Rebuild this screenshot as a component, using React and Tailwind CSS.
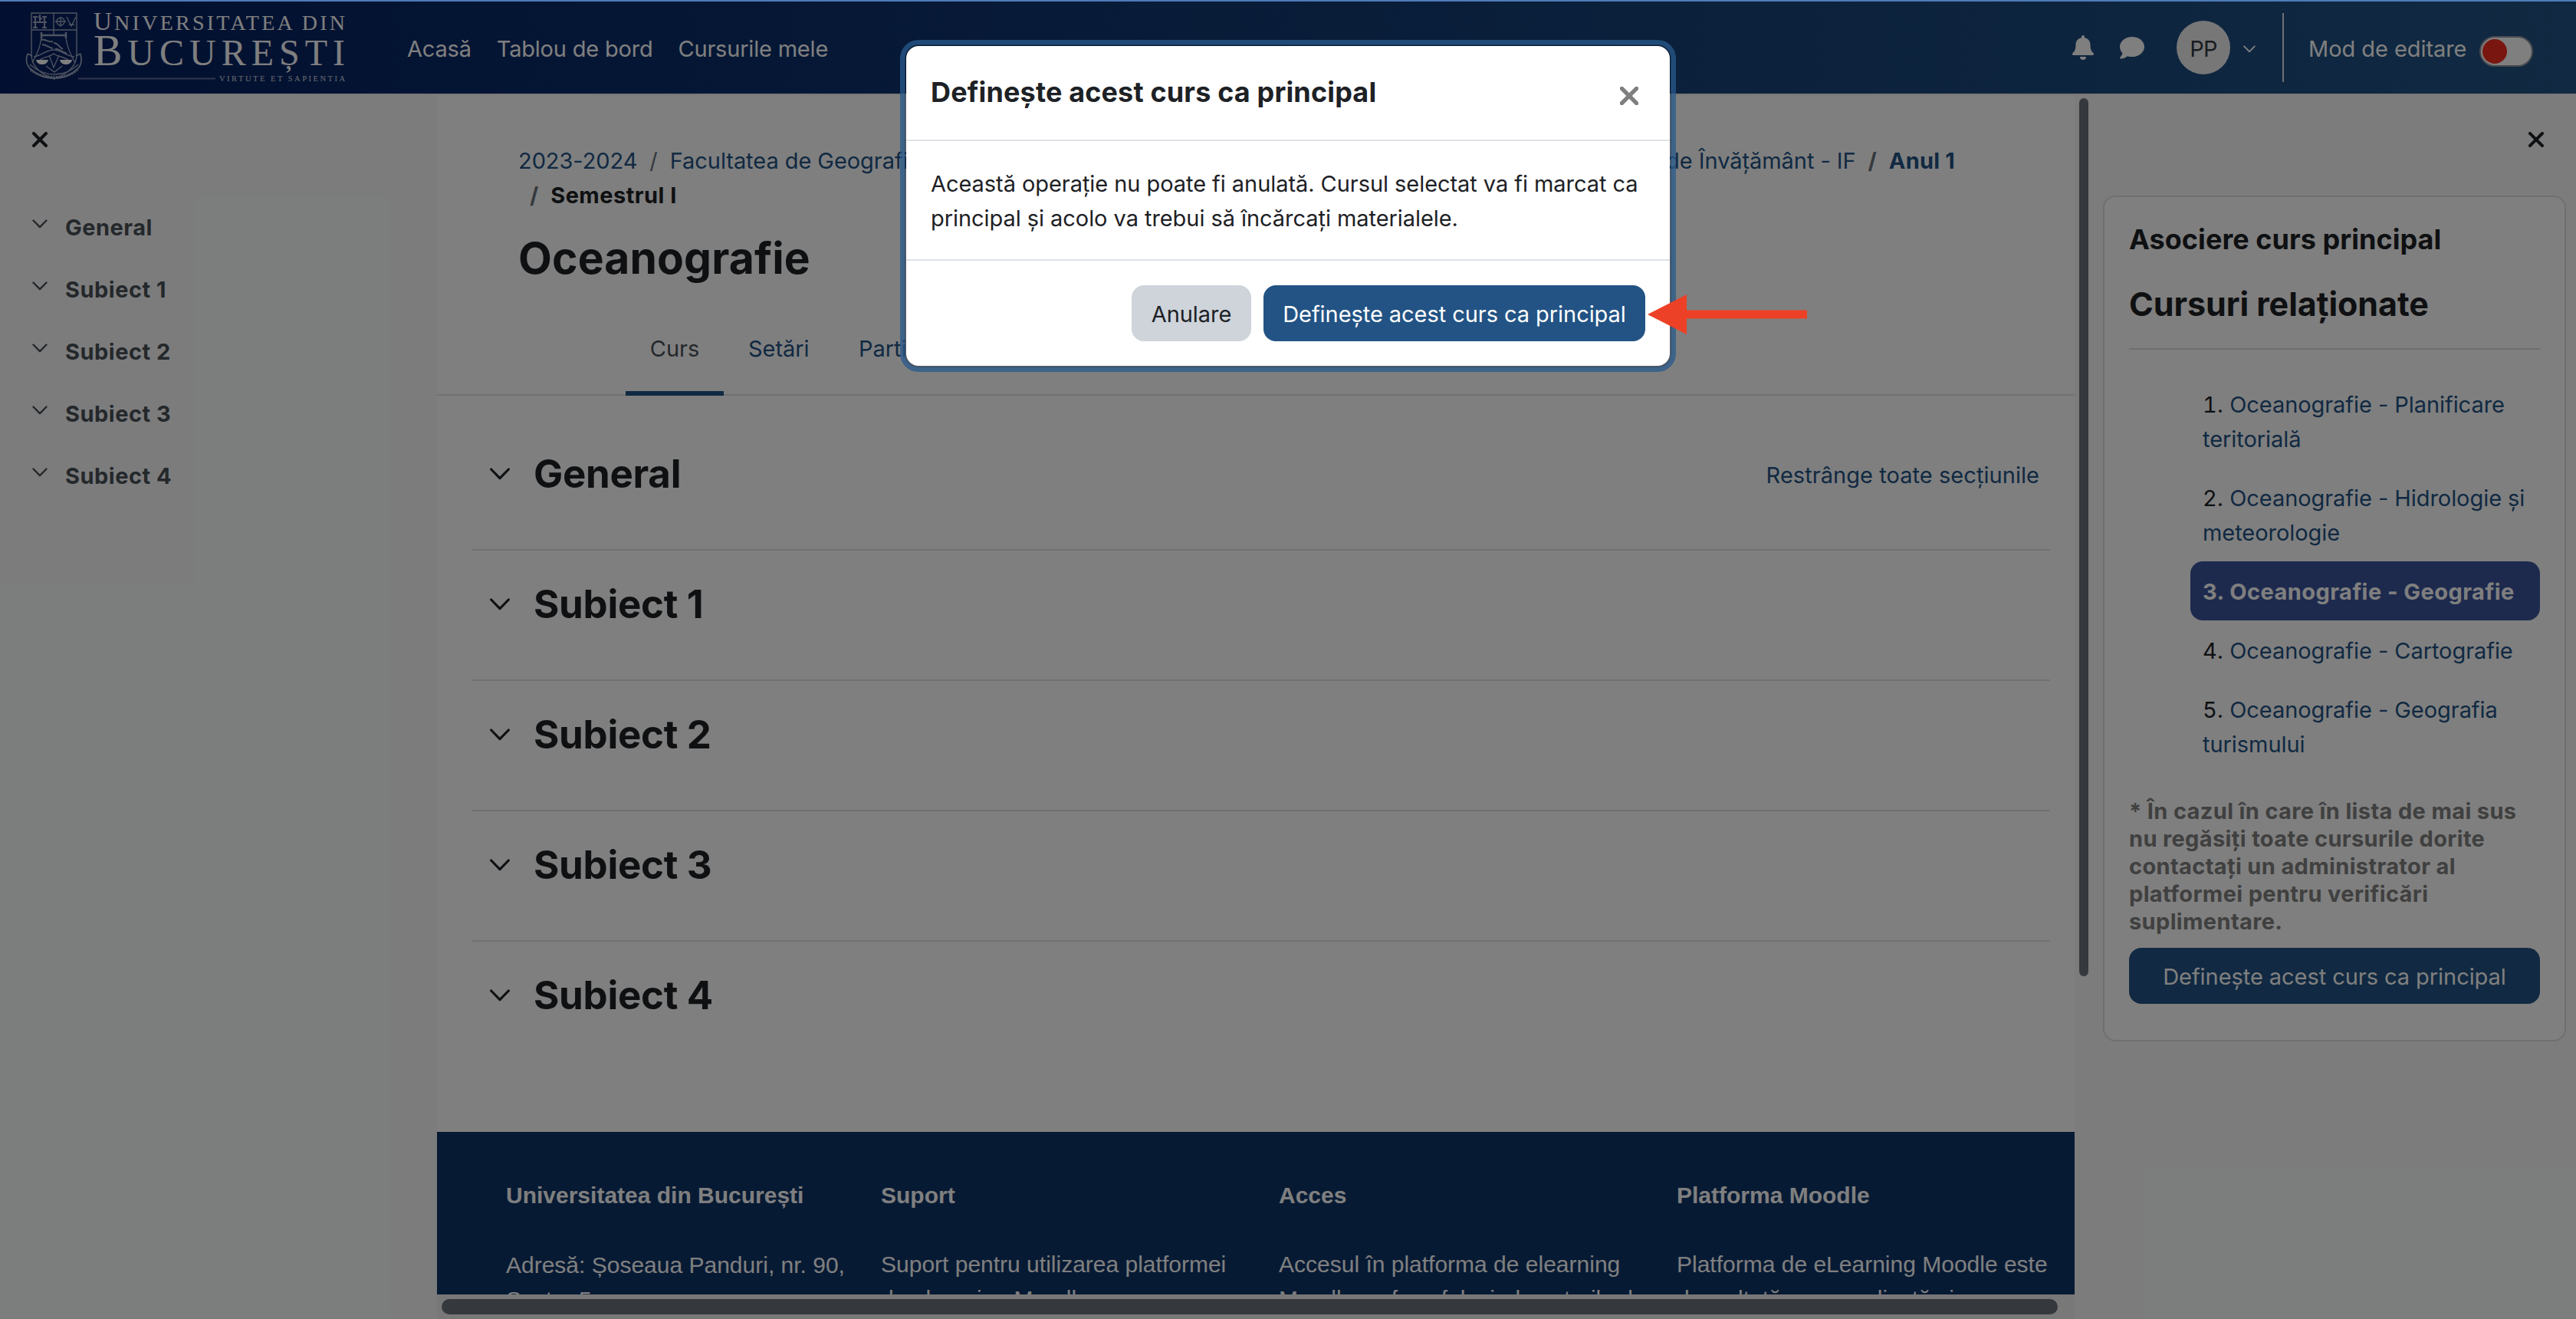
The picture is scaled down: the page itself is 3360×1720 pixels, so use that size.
import React from "react";

const sections = ["General", "Subiect 1", "Subiect 2", "Subiect 3", "Subiect 4"];

const relatedCourses = [
  "Oceanografie - Planificare teritorială",
  "Oceanografie - Hidrologie și meteorologie",
  "Oceanografie - Geografie",
  "Oceanografie - Cartografie",
  "Oceanografie - Geografia turismului",
];

const Chevron = ({ className, strokeWidth = 2 }) => (
  <svg viewBox="0 0 20 12" fill="none" stroke="currentColor" strokeWidth={strokeWidth} strokeLinecap="round" strokeLinejoin="round" className={className}>
    <path d="M1.5 1.5 10 10.2 18.5 1.5" />
  </svg>
);

const Cross = ({ className, strokeWidth = 4 }) => (
  <svg viewBox="0 0 20 20" fill="none" stroke="currentColor" strokeWidth={strokeWidth} strokeLinecap="round" className={className}>
    <path d="M2 2 18 18M18 2 2 18" />
  </svg>
);

const Logo = () => (
  <svg viewBox="0 0 418 92" className="w-[418px] h-[92px] -mt-1 overflow-visible" fill="none" stroke="#fff">
    {/* coat of arms */}
    <g strokeWidth="1.4" opacity="0.6">
      <path d="M7 3h59v54c0 18-16 27-29.500 32C23 84 7 75 7 57z" />
      <path d="M7 25h59M36 3v22" />
      <path d="M12 8v14M24 8v14M9 8h6M21 8h6M9 22h6M21 22h6M9 15h18M18 5v9M16 8l5 3" strokeWidth="2" />
      <circle cx="45" cy="14" r="5" />
      <path d="M38 14h14M45 8v13M53 8l6 12 6-12M56 18h7" />
      <path d="M19 32h34M20 28v8M52 28v8" strokeWidth="2.500" />
      <path d="M36 25v7M20 36c-2 12-6 22-12 32M52 36c2 12 6 22 12 32" />
      <path d="M19 38c6-2 11 4 16 2M21 44c6 0 9 5 14 5M36 42c6 0 7 6 12 8M38 50c5-2 9 6 15 5" strokeWidth="2" />
      <path d="M10 60c10-1 16-9 26-9s16 8 27 9M16 66c8-8 13-4 20-10 8 6 12 2 21 10" />
      <path d="M2 56c-3 8-1 15 3 19 9 9 20 13 32 13s22-4 31-13c4-4 5-11 3-19M2 56l6 3M71 56l-6 3" strokeWidth="1.800" />
      <path d="M5 70c10 9 20 13 32 13s22-4 31-13M30 58l6 16 7-16M26 72l11 8 10-8" />
      <path d="M6 77c9 7 19 9.500 31 9.500S59 84 67 77" strokeDasharray="2 1.500" strokeWidth="3" />
    </g>
    <path d="M13 64h16c-1 4-4 6-8 6s-7-2-8-6zM44 64h16c-1 4-4 6-8 6s-7-2-8-6z" fill="#fff" stroke="none" />
    <g fill="#fff" stroke="none" fontFamily="'Liberation Serif', serif">
      <text x="88" y="25" fontSize="33" textLength="328" lengthAdjust="spacing">
        U<tspan fontSize="28">NIVERSITATEA DIN</tspan>
      </text>
      <text x="88" y="71" fontSize="56" textLength="328" lengthAdjust="spacing">
        B<tspan fontSize="48">UCUREȘTI</tspan>
      </text>
      <text x="252" y="92" fontSize="10.500" textLength="164" lengthAdjust="spacing" opacity="0.8">VIRTUTE ET SAPIENTIA</text>
    </g>
    <path d="M68 88.500h179" strokeWidth="2" opacity="0.35" />
  </svg>
);

const Navbar = () => (
  <header className="h-[124px] shrink-0 flex items-center border-t-2 border-b-2 border-t-[#4f7bb8] border-b-[#eeeff0] bg-gradient-to-r from-[#061f60] to-[#225384] pl-[34px] pr-14 text-white">
    <Logo />
    <nav className="flex gap-[33px] ml-[79px] pt-[3px] tracking-[-0.2px]">
      <a>Acasă</a>
      <a>Tablou de bord</a>
      <a>Cursurile mele</a>
    </nav>
    <div className="ml-auto flex items-center">
      <svg viewBox="0 0 28 32" fill="currentColor" className="w-7 h-8">
        <path d="M14 0c-1.200 0-2 .9-2 2v1.200C7.500 4 4.500 7.700 4.500 12c0 6-1.200 8.700-4 11.300-1 1-.4 2.700 1 2.700h25c1.400 0 2-1.700 1-2.700-2.800-2.600-4-5.300-4-11.300 0-4.300-3-8-7.500-8.800V2c0-1.100-.8-2-2-2zM10 28a4 4 0 0 0 8 0z" />
      </svg>
      <svg viewBox="0 0 32 29" fill="currentColor" className="ml-[34px] w-8 h-[29px]">
        <path d="M16 0C7.200 0 0 5.800 0 13c0 3.100 1.300 5.900 3.500 8.200C2.700 24.300.3 26.900.2 27c-.3.700.1 1.500.8 1.500 4.200 0 7.300-2 8.900-3.300 1.900.7 3.900.9 6.100.9 8.800 0 16-5.900 16-13.100S24.800 0 16 0z" />
      </svg>
      <div className="ml-[42px] size-[70px] rounded-full bg-[#eeeff0] text-[#343a40] flex items-center justify-center pt-[3px] tracking-[-0.8px]">PP</div>
      <Chevron className="ml-[17px] mt-1 w-4 h-[10px]" strokeWidth={2.4} />
      <div className="ml-[35px] w-0.5 h-[90px] bg-[#dee2e6]" />
      <span className="ml-8 w-[223px] pt-[3px] whitespace-nowrap">Mod de editare</span>
      <div className="mt-[10px] w-[70px] h-10 rounded-full border-2 border-[#8f959e] bg-white p-0.5">
        <div className="size-8 rounded-full bg-[#f42c20]" />
      </div>
    </div>
  </header>
);

const CourseIndex = () => (
  <aside className="w-[570px] shrink-0 bg-[#f8f9fa] pl-[42px]">
    <Cross className="mt-12 size-5 text-[#1d2125]" />
    <ul className="mt-[82px] font-bold text-[#495057]">
      {sections.map((name) => (
        <li key={name} className="flex h-[81px]">
          <Chevron className="mt-[12px] mr-[23px] w-5 h-3" strokeWidth={2.4} />
          <span className="tracking-[0.5px]">{name}</span>
        </li>
      ))}
    </ul>
  </aside>
);

const Footer = () => (
  <footer className="h-[212px] shrink-0 overflow-hidden bg-[#0e3469] pl-[90px] pt-[60px] flex text-white text-[30px] leading-[45px] tracking-normal [font-family:'Liberation_Sans',sans-serif] whitespace-nowrap">
    <div className="w-[489px]">
      <h5 className="font-bold mb-[46px]">Universitatea din București</h5>
      <p>Adresă: Șoseaua Panduri, nr. 90,<br />Sector 5</p>
    </div>
    <div className="w-[519px]">
      <h5 className="font-bold mb-[45px]">Suport</h5>
      <p>Suport pentru utilizarea platformei<br />de elearning Moodle</p>
    </div>
    <div className="w-[519px]">
      <h5 className="font-bold mb-[45px]">Acces</h5>
      <p>Accesul în platforma de elearning<br />Moodle se face folosind conturile de</p>
    </div>
    <div>
      <h5 className="font-bold mb-[45px]">Platforma Moodle</h5>
      <p>Platforma de eLearning Moodle este<br />dezvoltată, personalizată și</p>
    </div>
  </footer>
);

const CoursePage = () => (
  <main className="w-[2136px] shrink-0 flex flex-col">
    <div className="h-[1352px] shrink-0 bg-white">
      <div className="h-[392px] border-b-2 border-[#dee2e6] pt-[63px] flex flex-col">
        <div className="pl-[106px] text-[#225384]">
          <div className="flex justify-between w-[1874px]">
            <div className="flex gap-4">
              <a>2023-2024</a>
              <span className="text-[#6a737b]">/</span>
              <a>Facultatea de Geografie</a>
            </div>
            <div className="flex gap-4">
              <a>Forma de Învățământ - IF</a>
              <span className="text-[#6a737b] font-bold">/</span>
              <a className="font-bold tracking-[0.2px]">Anul 1</a>
            </div>
          </div>
          <div className="flex gap-4 pl-[15px] font-bold text-[#1d2125]">
            <span className="text-[#6a737b]">/</span>
            <span className="tracking-[0.45px]">Semestrul I</span>
          </div>
          <h1 className="mt-[27px] text-[57px] leading-[66px] font-bold text-[#1d2125] tracking-[0.1px]">Oceanografie</h1>
        </div>
        <div className="mt-auto -mb-0.5 ml-[246px] flex text-[#225384]">
          <span className="h-[84px] w-32 text-center border-b-6 border-[#225384] text-[#495057]">Curs</span>
          <span className="pl-8 w-[144px]">Setări</span>
          <span className="pl-8">Participanți</span>
        </div>
      </div>
      <div className="ml-[46px] mr-8">
        {sections.map((name, i) => (
          <div key={name} className={"flex items-start text-[#1d2125] " + (i === 0 ? "h-[202px] pt-[69px]" : "h-[170px] pt-[37px]") + (i < 4 ? " border-b-2 border-[#dee2e6]" : "")}>
            <Chevron className="ml-[22px] mt-[25px] mr-[30px] w-7 h-4" strokeWidth={2.4} />
            <h3 className="text-[51px] leading-[66px] font-bold tracking-[-0.3px]">{name}</h3>
            {i === 0 && <a className="ml-auto mr-[14px] mt-[12px] text-[#225384] tracking-[0.05px]">Restrânge toate secțiunile</a>}
          </div>
        ))}
      </div>
    </div>
    <Footer />
    <div className="flex-1 bg-[#f1f1f1] pt-[6px]">
      <div className="ml-[6px] w-[2108px] h-5 rounded-full bg-[#6a737b]" />
    </div>
  </main>
);

const RelatedBlock = () => (
  <section className="w-[604px] h-[1103px] rounded-2xl border-2 border-[#dfdfdf] bg-white px-8 pt-[33px] text-[#1d2125]">
    <h5 className="text-[36px] leading-[44px] font-bold tracking-[0.05px]">Asociere curs principal</h5>
    <h3 className="mt-[35px] text-[43px] leading-[54px] font-bold tracking-[-0.05px]">Cursuri relaționate</h3>
    <hr className="mt-[31px] border-t-2 border-[#dfdfdf]" />
    <ol className="mt-8 ml-20">
      {relatedCourses.map((course, i) =>
        i === 2 ? (
          <li key={course} className="pt-[17px] pb-[15px] pl-4 rounded-2xl bg-[#3b559c] text-white font-bold tracking-[0.45px] whitespace-nowrap">{i + 1}. {course}</li>
        ) : (
          <li key={course} className="pt-[17px] pb-[15px] pl-4">
            <span className="tabular-nums">{i + 1}</span>. <a className="text-[#225384]">{course}</a>
          </li>
        )
      )}
    </ol>
    <p className="mt-[32px] leading-9 font-bold tracking-[0.35px] text-[#808080] whitespace-nowrap">
      * În cazul în care în lista de mai sus<br />
      nu regăsiți toate cursurile dorite<br />
      contactați un administrator al<br />
      platformei pentru verificări<br />
      suplimentare.
    </p>
    <button className="mt-4 pt-0.5 block w-full h-[73px] rounded-2xl bg-[#225384] text-white">Definește acest curs ca principal</button>
  </section>
);

const ConfirmDialog = () => (
  <div className="absolute left-[1180px] top-[58px] w-[1000px] rounded-[18px] border-2 border-black/20 bg-white bg-clip-padding ring-6 ring-[#28598c]/75 text-[#1d2125]">
    <div className="flex h-[124px] items-start justify-between border-b-2 border-[#dee2e6] pl-8 pr-[41px] pt-8">
      <h5 className="text-[36px] leading-[56px] font-bold tracking-[0.15px]">Definește acest curs ca principal</h5>
      <Cross className="mt-[21px] size-6 text-[#7f7f7f]" strokeWidth={4.5} />
    </div>
    <p className="px-8 pt-[33px] pb-[31px] whitespace-nowrap">
      Această operație nu poate fi anulată. Cursul selectat va fi marcat ca<br />
      principal și acolo va trebui să încărcați materialele.
    </p>
    <div className="flex justify-end gap-4 border-t-2 border-[#dee2e6] px-8 py-8">
      <button className="w-[156px] h-[73px] pt-0.5 rounded-2xl bg-[#ced4da]">Anulare</button>
      <button className="w-[498px] h-[73px] pt-0.5 rounded-2xl bg-[#225384] text-white">Definește acest curs ca principal</button>
    </div>
  </div>
);

const App = () => {
  return (
    <div className="relative flex flex-col w-[3360px] h-[1720px] overflow-hidden text-[29px] leading-[45px] tracking-[-0.06px] font-[Inter,sans-serif]">
      <Navbar />
      <div className="flex flex-1 min-h-0">
        <CourseIndex />
        <CoursePage />
        <div className="w-6 shrink-0 bg-[#f8f9fa] pl-[6px] pt-1">
          <div className="w-3 h-[1145px] rounded-full bg-[#6a737b]" />
        </div>
        <aside className="flex-1 bg-[#f8f9fa] pl-[13px]">
          <Cross className="mt-12 ml-[555px] size-5 text-[#1d2125]" />
          <div className="mt-[63px]">
            <RelatedBlock />
          </div>
        </aside>
      </div>
      <div className="absolute inset-x-0 top-0.5 bottom-0 bg-black/50" />
      <ConfirmDialog />
      <svg viewBox="0 0 208 52" className="absolute left-[2149px] top-[384px] w-52 h-[52px]" fill="#ed4127">
        <path d="M0 26 51 0v20.500h157v11H51V52z" />
      </svg>
    </div>
  );
};

export default App;
